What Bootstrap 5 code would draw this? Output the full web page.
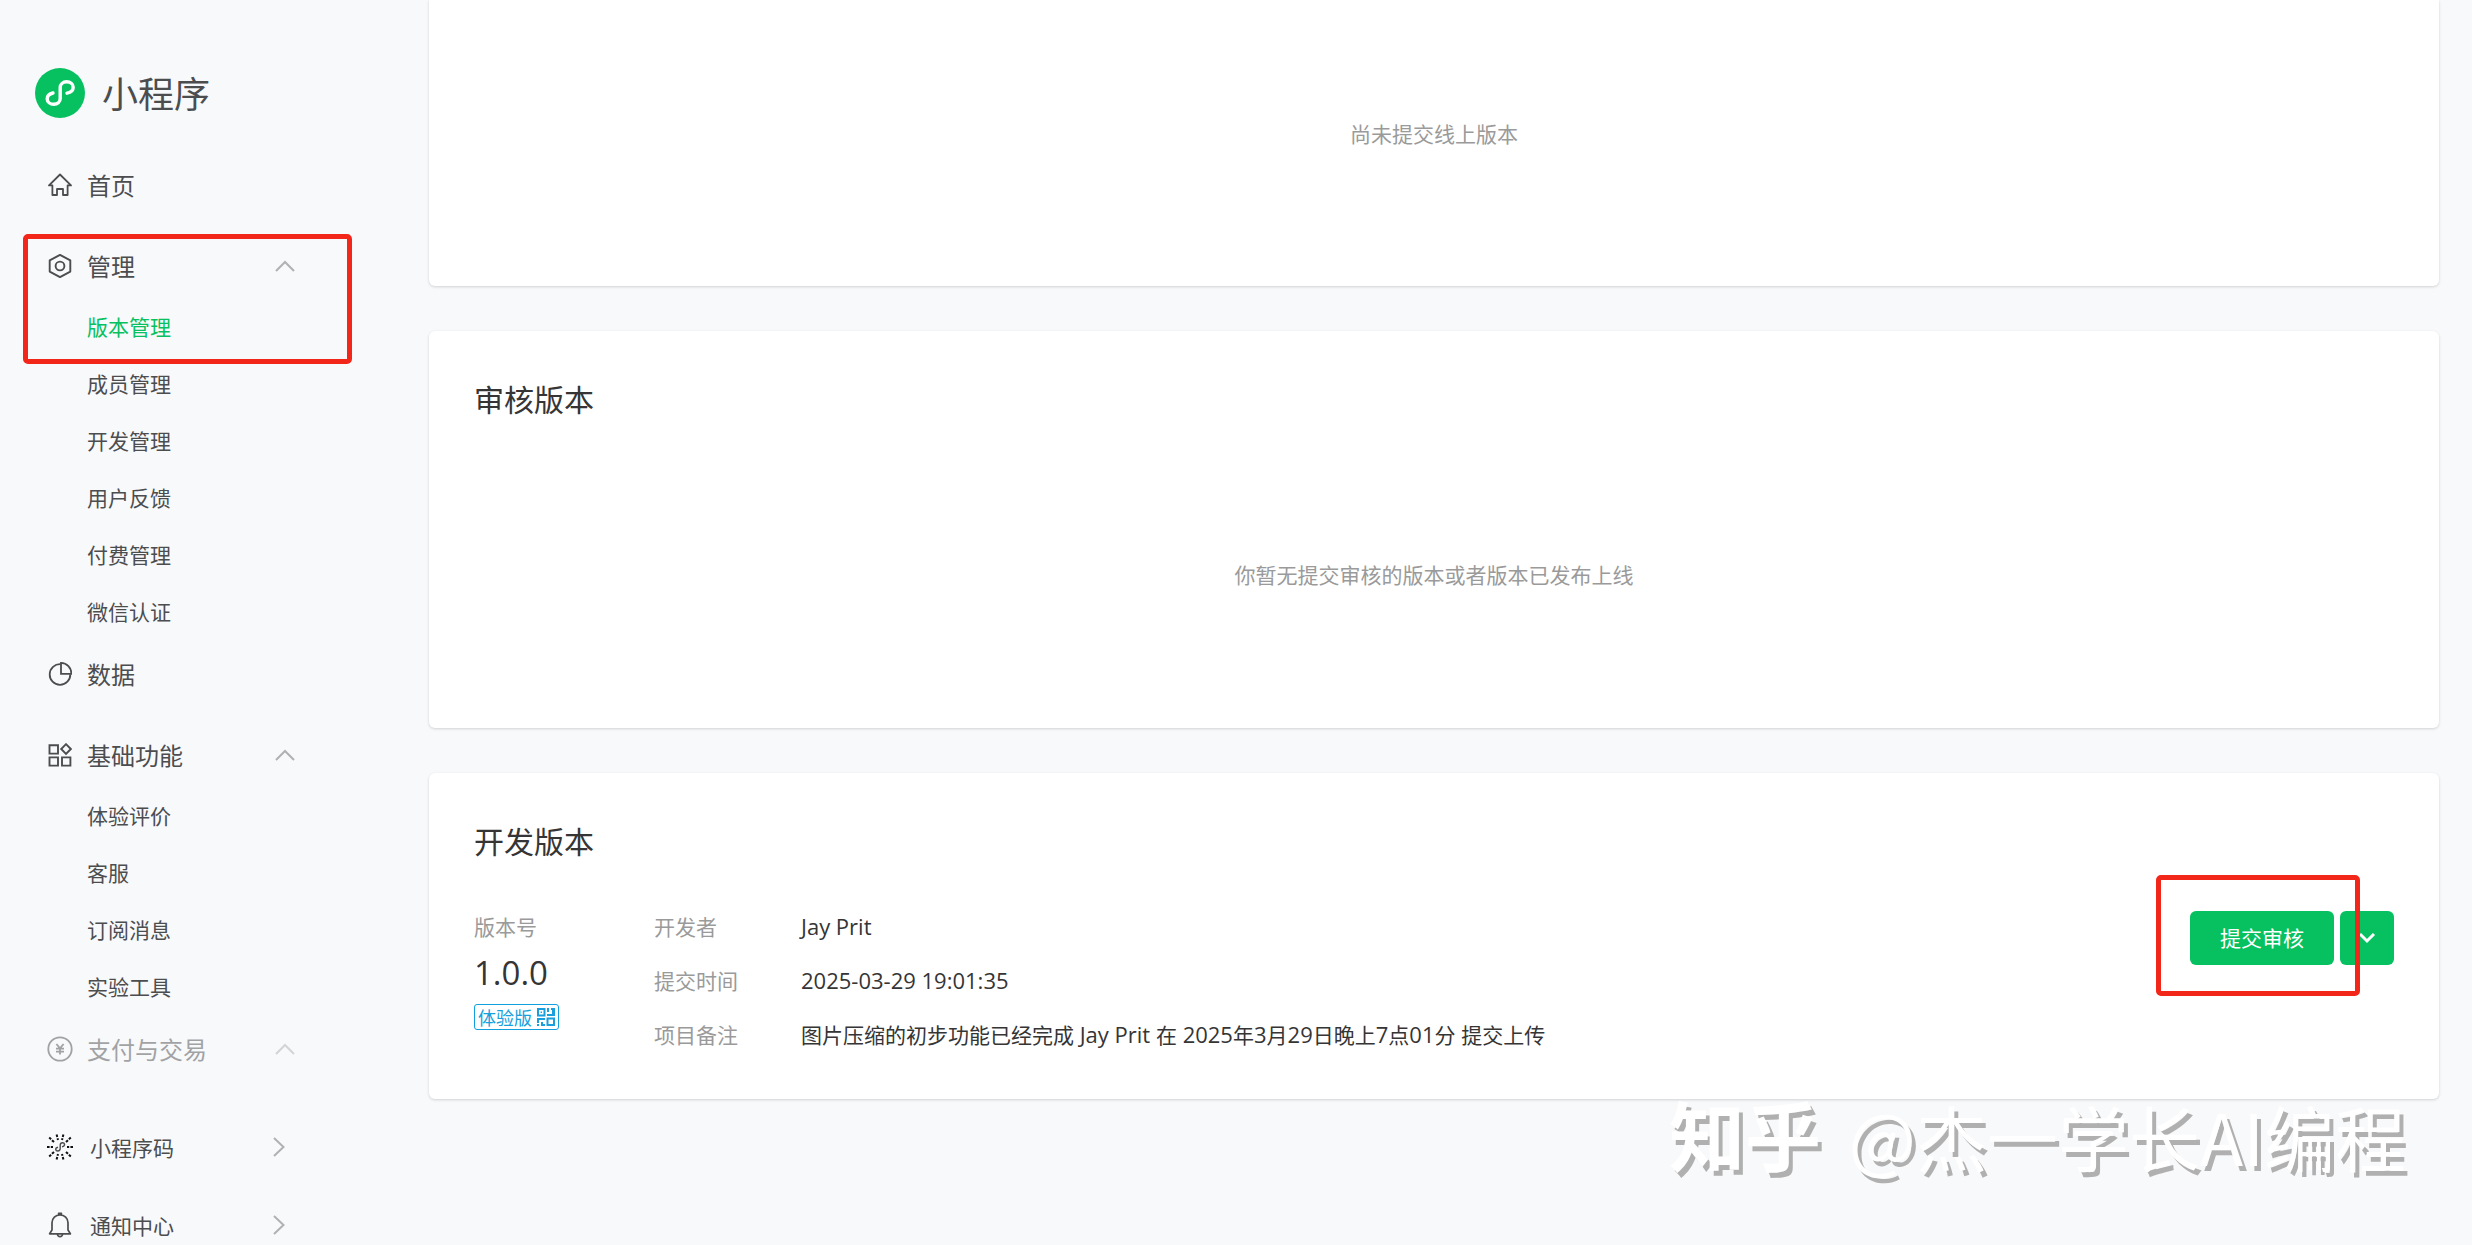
<!DOCTYPE html>
<html lang="zh-CN">
<head>
<meta charset="utf-8">
<meta name="viewport" content="width=device-width, initial-scale=1">
<title>小程序 - 版本管理</title>
<link href="https://cdn.jsdelivr.net/npm/bootstrap@5.3.0/dist/css/bootstrap.min.css" rel="stylesheet">
<style>
  body {
    background: #f8f9fb;
    color: #353535;
    font-family: "Noto Sans CJK SC", "Open Sans", sans-serif;
    font-size: 21px;
    line-height: 30px;
  }
  .shell { height: 100vh; }
  .side { width: 429px; padding-top: 68px; color: #4c4d4f; }
  .side a { color: inherit; text-decoration: none; }
  .side svg, .btn svg, .trial svg { fill: none; stroke: currentColor; display: block; flex: none; }
  .brand { height: 50px; margin: 0 0 34px 35px; gap: 17px; font-size: 36px; }
  .brand span { padding-bottom: 2px; }
  .brand .logo { stroke: #fff; }
  .top-item { height: 66px; padding-left: 48px; gap: 15px; font-size: 24px; width: 296px; }
  .top-item.single { margin-bottom: 15px; }
  .sub-item { height: 57px; padding: 0 0 4px 87px; }
  .side a.active { color: #07c160; }
  .arrow { margin-left: auto; color: #b0b1b3; }
  .faded { opacity: .5; }
  .tools { margin-top: 26px; }
  .tool-item { height: 78px; padding-left: 46px; gap: 16px; width: 286px; }
  .red-frame { position: absolute; border: 5px solid #f3261a; border-radius: 5px; pointer-events: none; z-index: 3; }
  .frame-nav { left: 23px; top: 1px; width: 329px; height: 130px; }
  .content { padding-right: 33px; gap: 45px; }
  .panel { background: #fff; border-radius: 6px; box-shadow: 0 1px 3px rgba(0, 0, 0, .16); padding: 43px 45px; }
  .panel-first { border-radius: 0 0 6px 6px; height: 286px; padding: 118px 45px; }
  .panel-audit { height: 397px; }
  .panel-dev { height: 326px; }
  .panel h2 { font-size: 30px; line-height: 48px; font-weight: 400; margin: 0; }
  .panel-audit .note { padding-top: 137px; }
  .note, .hint { color: #9a9a9a; }
  .dev-body { margin-top: 47px; }
  .version { width: 180px; }
  .ver-number { font: 33px/48px "Open Sans", sans-serif; margin: 8px 0 7px; }
  .trial { width: 85px; height: 26px; border: 1px solid #10a0e0; border-radius: 3px; color: #189fdc; font-size: 18px; line-height: 24px; padding: 0 3px; }
  .info dt { width: 147px; font-weight: 400; color: #9a9a9a; }
  .info dd { margin: 0; }
  .info .line { margin-bottom: 24px; }
  .latin { font-family: "Open Sans", sans-serif; font-size: 22px; }
  .actions { gap: 6px; height: 54px; margin-left: auto; }
  .btn-wx { --bs-btn-bg: #07c160; --bs-btn-color: #fff; --bs-btn-hover-bg: #06ad56; --bs-btn-hover-color: #fff; --bs-btn-active-bg: #06ad56; --bs-btn-border-radius: 6px; border: 0; height: 54px; padding: 0; font-size: 21px; }
  .btn-main { width: 144px; }
  .btn-more { width: 54px; }
  .frame-btn { left: -34px; top: -36px; width: 204px; height: 121px; }
  .sign { position: absolute; right: 66px; bottom: 66px; color: #fff; text-shadow: 4px 5px 0 #b0b0b0; font-size: 71px; line-height: 88px; white-space: nowrap; pointer-events: none; }
  .sign b { font-weight: 700; font-size: 76px; margin-right: 12px; }
</style>
</head>
<body>
<div class="shell d-flex position-relative overflow-hidden">
  <nav class="side flex-shrink-0" aria-label="主导航">
    <a href="#" class="brand d-flex align-items-center">
      <svg class="logo" width="50" height="50" viewBox="0 0 50 50"><circle cx="25" cy="25" r="25" fill="#07c160" stroke="none"/><path d="M32 25.2C36 24.4 38.2 22 38.2 19.2C38.2 16 35.2 13.8 31.6 13.8C28 13.8 25.2 16.2 25.2 19.6V30.6C25.2 34 22.4 36.3 18.8 36.3C15.2 36.3 12.2 34 12.2 30.9C12.2 28 14.4 25.8 18 25" stroke-width="3.4" stroke-linecap="round"/></svg>
      <span>小程序</span>
    </a>
    <a href="#" class="top-item single d-flex align-items-center">
      <svg width="24" height="24" viewBox="0 0 24 24" stroke-width="1.8" stroke-linejoin="round"><path d="M12 1.5L1 12.4H4.4V22H9V16H15V22H19.6V12.4H23Z"/></svg>
      首页
    </a>
    <div class="position-relative">
      <a href="#" class="top-item d-flex align-items-center">
        <svg width="24" height="24" viewBox="0 0 24 24" stroke-width="1.9" stroke-linejoin="round"><path d="M12 .9L22.3 6.4V17.6L12 23.1L1.7 17.6V6.4Z"/><circle cx="12" cy="12" r="4.4"/></svg>
        管理
        <svg class="arrow" width="22" height="12" viewBox="0 0 22 12" stroke-width="2"><path d="M2 11L11 2L20 11"/></svg>
      </a>
      <a href="#" class="sub-item active d-flex align-items-center" aria-current="page">版本管理</a>
      <span class="red-frame frame-nav"></span>
    </div>
    <a href="#" class="sub-item d-flex align-items-center">成员管理</a>
    <a href="#" class="sub-item d-flex align-items-center">开发管理</a>
    <a href="#" class="sub-item d-flex align-items-center">用户反馈</a>
    <a href="#" class="sub-item d-flex align-items-center">付费管理</a>
    <a href="#" class="sub-item d-flex align-items-center">微信认证</a>
    <a href="#" class="top-item single d-flex align-items-center">
      <svg width="24" height="24" viewBox="0 0 24 24" stroke-width="1.8"><path d="M12.6 2.2A10.3 10.3 0 1 0 22.3 12.2"/><path d="M13 .9V11.8H23.4A10.8 10.8 0 0 0 13 .9Z"/></svg>
      数据
    </a>
    <a href="#" class="top-item d-flex align-items-center">
      <svg width="24" height="24" viewBox="0 0 24 24" stroke-width="1.9"><path d="M1.5 2.2H10V10.6H1.5ZM1.5 14.4H10V22.6H1.5ZM14 14.4H22.4V22.6H14ZM18 1.2L22.8 6L18 10.8L13.2 6Z"/></svg>
      基础功能
      <svg class="arrow" width="22" height="12" viewBox="0 0 22 12" stroke-width="2"><path d="M2 11L11 2L20 11"/></svg>
    </a>
    <a href="#" class="sub-item d-flex align-items-center">体验评价</a>
    <a href="#" class="sub-item d-flex align-items-center">客服</a>
    <a href="#" class="sub-item d-flex align-items-center">订阅消息</a>
    <a href="#" class="sub-item d-flex align-items-center">实验工具</a>
    <a href="#" class="top-item faded d-flex align-items-center">
      <svg width="24" height="24" viewBox="0 0 24 24" stroke-width="1.8" overflow="visible"><circle cx="12" cy="12" r="11.7"/><path d="M8.4 7L12 11.4L15.6 7M12 11.4V17.6M8 11.6H16M8 14.6H16"/></svg>
      支付与交易
      <svg class="arrow" width="22" height="12" viewBox="0 0 22 12" stroke-width="2"><path d="M2 11L11 2L20 11"/></svg>
    </a>
    <div class="tools">
      <a href="#" class="tool-item d-flex align-items-center">
        <svg width="28" height="28" viewBox="0 0 28 28" stroke-width="1.8"><g stroke="#111" stroke-width="2" stroke-dasharray="2.6 1.2 4"><path d="M1 14H7M27 14H21M10.6 1.5L12 7M17.4 1.5L16 7M10.6 26.5L12 21M17.4 26.5L16 21M3.2 4.6L8 9M24.8 4.6L20 9M3.2 23.4L8 19M24.8 23.4L20 19"/></g><path stroke-width="1.4" d="M16 13.8C20 12.6 18.6 9.8 16.6 9.8C15 9.8 14.2 10.8 14.2 12.2V15.6C14.2 17.2 13 18 11.8 18C9.4 18 8.6 15 12 14.2"/></svg>
        小程序码
        <svg class="arrow" width="14" height="22" viewBox="0 0 14 22" stroke-width="2"><path d="M2 2L11.5 11L2 20"/></svg>
      </a>
      <a href="#" class="tool-item d-flex align-items-center">
        <svg width="28" height="28" viewBox="0 0 28 28" stroke-width="1.7" stroke-linejoin="round"><path d="M3.6 22.8H24.4L22 19V11.8C22 7 18.4 4 14 4S6 7 6 11.8V19ZM12.6 4V2.4H15.4V4M11.4 23C11.8 26.6 16.2 26.6 16.6 23"/></svg>
        通知中心
        <svg class="arrow" width="14" height="22" viewBox="0 0 14 22" stroke-width="2"><path d="M2 2L11.5 11L2 20"/></svg>
      </a>
    </div>
  </nav>

  <main class="content flex-grow-1 d-flex flex-column">
    <section class="panel panel-first text-center">
      <p class="note m-0">尚未提交线上版本</p>
    </section>

    <section class="panel panel-audit">
      <h2>审核版本</h2>
      <p class="note m-0 text-center">你暂无提交审核的版本或者版本已发布上线</p>
    </section>

    <section class="panel panel-dev">
      <h2>开发版本</h2>
      <div class="dev-body d-flex align-items-start">
        <div class="version">
          <div class="hint">版本号</div>
          <div class="ver-number">1.0.0</div>
          <a href="#" class="trial d-flex align-items-center justify-content-between text-decoration-none">体验版
            <svg width="18" height="18" viewBox="0 0 18 18" stroke-width="2"><path d="M1 1H7.5V7.5H1ZM10.5 10.5H17V17H10.5Z"/><path fill="currentColor" stroke="none" d="M3.6 3.6H5V5H3.6ZM10 0H12V4H10ZM14 0H18V8H10V6H15V2H14ZM0 10H8V12H2V15H0ZM0 16H2V18H0ZM4 14H6V16H8V18H4Z"/></svg>
          </a>
        </div>
        <dl class="info m-0">
          <div class="line d-flex"><dt>开发者</dt><dd><span class="latin">Jay Prit</span></dd></div>
          <div class="line d-flex"><dt>提交时间</dt><dd><span class="latin">2025-03-29 19:01:35</span></dd></div>
          <div class="d-flex"><dt>项目备注</dt><dd>图片压缩的初步功能已经完成<span class="latin"> Jay Prit </span>在<span class="latin"> 2025</span>年<span class="latin">3</span>月<span class="latin">29</span>日晚上<span class="latin">7</span>点<span class="latin">01</span>分<span class="latin"> </span>提交上传</dd></div>
        </dl>
        <div class="actions d-flex position-relative">
          <button type="button" class="btn btn-wx btn-main">提交审核</button>
          <button type="button" class="btn btn-wx btn-more d-flex align-items-center justify-content-center" aria-label="更多操作">
            <svg width="18" height="12" viewBox="0 0 18 12" stroke-width="3"><path d="M2 2L9 9L16 2"/></svg>
          </button>
          <span class="red-frame frame-btn"></span>
        </div>
      </div>
    </section>
  </main>

  <div class="sign"><b>知乎</b> @杰一学长AI编程</div>
</div>
<script src="https://cdn.jsdelivr.net/npm/bootstrap@5.3.0/dist/js/bootstrap.bundle.min.js"></script>
</body>
</html>
